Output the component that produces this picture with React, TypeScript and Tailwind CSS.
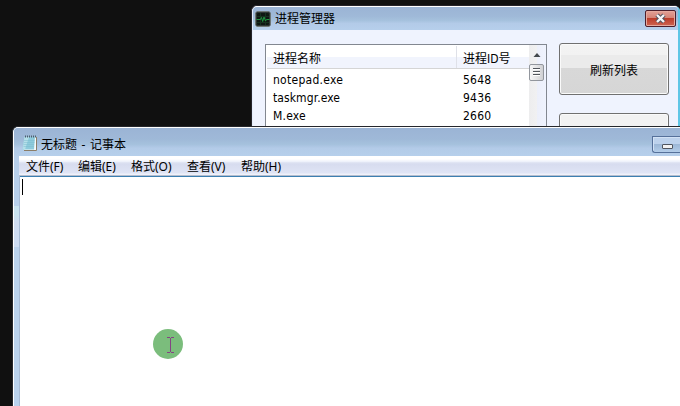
import React from "react";

const ui = "font-['Noto_Sans','Noto_Sans_CJK_SC',sans-serif]";
const tahoma = "font-['DejaVu_Sans_Condensed','Noto_Sans_CJK_SC',sans-serif]";

const titleGradient =
  "bg-[linear-gradient(to_bottom,#9bb4d5_0%,#9fb9d8_40%,#a5c1dd_58%,#b3cbe8_72%,#b6cfeb_100%)]";

const processes = [
  { name: "notepad.exe", pid: "5648", tracking: "tracking-[0.27px]" },
  { name: "taskmgr.exe", pid: "9436", tracking: "tracking-[0.1px]" },
  { name: "M.exe", pid: "2660", tracking: "tracking-[0.2px]" },
];

const menus = [
  { label: "文件(F)", width: "w-[52px]" },
  { label: "编辑(E)", width: "w-[53px]" },
  { label: "格式(O)", width: "w-[56px]" },
  { label: "查看(V)", width: "w-[54px]" },
  { label: "帮助(H)", width: "w-[54px]" },
];

function MonitorIcon() {
  return (
    <svg width="16" height="16" viewBox="0 0 16 16" className="shrink-0">
      <rect x="0.5" y="0.5" width="15" height="15" rx="2.5" fill="#101412" stroke="#6f7775" />
      <rect x="1.5" y="1.5" width="13" height="13" rx="1.5" fill="#0e1712" stroke="#2f3634" />
      <path d="M2 5.5h12M2 11.5h12M5.5 2v12M10.5 2v12" stroke="#16301f" strokeWidth="1" />
      <path d="M1.5 8.5h4l1-2 1.2 4L9 6l1.5 4 1-1.5h3" fill="none" stroke="#1f9440" strokeWidth="1" />
    </svg>
  );
}

function NotepadIcon() {
  return (
    <svg width="16" height="17" viewBox="0 0 16 17" className="shrink-0">
      <path d="M3 2h12v13.5l-13 .5z" fill="#f5fafa" />
      <path d="M14.5 2v13.5H2" fill="none" stroke="#8b7d68" />
      <path d="M2.5 2H13l-1 12.5H0.5z" fill="#8ecbdc" />
      <path d="M2.5 2H7L3 14.5H.5z" fill="#b5dfe9" />
      <path d="M2 5.5h10.5M2 7.5h10.5M1.5 9.5h10.5M1.5 11.5h10.5" stroke="#7dbccf" strokeWidth=".5" />
      <path d="M3 1.5h11" stroke="#4b626e" strokeWidth="2" strokeDasharray="1 1" />
    </svg>
  );
}

function ProcessManager() {
  return (
    <section className="absolute left-[251px] top-[5px] h-[130px] w-[429px] overflow-hidden rounded-t-[6px] border-l border-t border-[#25232a] bg-[#eff3fe]">
      <div className="h-full overflow-hidden rounded-t-[5px] border-l border-r-2 border-t border-l-[#e4edfa] border-r-[#5fc6e6] border-t-white">
        <header className={`flex h-[23px] items-center pl-[2px] pr-[2px] ${titleGradient}`}>
          <MonitorIcon />
          <h1 className={`ml-[4px] text-[12px] leading-[18px] text-black ${ui}`}>进程管理器</h1>
          <button className="ml-auto mt-[-1px] flex h-[17px] w-[31px] items-center justify-center rounded-[2px] border border-[#4c1e2b] bg-[linear-gradient(to_bottom,#e2a197_0%,#d58477_45%,#bb3d2b_50%,#cf6552_100%)] shadow-[inset_0_0_0_1px_#e5a99e]">
            <svg width="13" height="11" viewBox="0 0 13 11">
              <path d="M3 2l7 7M10 2L3 9" stroke="#54545f" strokeWidth="4.4" />
              <path d="M3 2l7 7M10 2L3 9" stroke="#f5f6f8" strokeWidth="2.4" />
            </svg>
          </button>
        </header>
        <div className="flex pl-[12px]">
          <div className="mt-[14px] flex h-[100px] w-[282px] shrink-0 border-l border-r border-t border-[#828790] bg-white">
            <div className={`w-[263px] pl-px pt-px text-[12px] text-black ${tahoma}`}>
              <div className="flex h-[23px] border-b border-[#d5d5d5] bg-[linear-gradient(to_bottom,#fff_11px,#f1f4fd_11px)] leading-[27px]">
                <div className="w-[190px] border-r border-[#dfe1e8] pl-[6px]">进程名称</div>
                <div className="pl-[6px]">进程ID号</div>
              </div>
              <div className="pt-[2px]">
                {processes.map((p) => (
                  <div key={p.pid} className="flex h-[18px] leading-[18px]">
                    <span className={`w-[190px] pl-[6px] ${p.tracking}`}>{p.name}</span>
                    <span className="pl-[6px] tracking-[0.2px]">{p.pid}</span>
                  </div>
                ))}
              </div>
            </div>
            <div className="flex w-[17px] flex-col items-start bg-[linear-gradient(to_right,#ededee,#f1f1f2_50%,#eceffa_50%,#eff3fe)] pt-[8px]">
              <svg width="8" height="4" viewBox="0 0 8 4" className="ml-[4px]">
                <path d="M4 0L7.5 4H.5z" fill="#43484d" />
              </svg>
              <div className="mt-[7px] flex h-[17px] w-[15px] flex-col items-center rounded-[2px] border border-[#92969d] bg-[linear-gradient(to_right,#f6f6f7,#e4e4e5_50%,#cfd0d3)] pt-[3px]">
                <i className="h-[2px] w-[7px] border-t border-[#51555b] bg-white" />
                <i className="mt-px h-[2px] w-[7px] border-t border-[#51555b] bg-white" />
                <i className="mt-px h-[2px] w-[7px] border-t border-[#51555b] bg-white" />
              </div>
            </div>
          </div>
          <div className="ml-[12px] mt-[13px] flex flex-col gap-[18px]">
            <button className={`h-[52px] w-[110px] rounded-[3px] border border-[#707070] bg-[linear-gradient(to_bottom,#f3f3f3_0px,#f2f2f2_11px,#ebebeb_11px,#ebebeb_24px,#d8d8d8_24px,#d6d6d6_100%)] pt-[3px] text-[12px] text-black shadow-[inset_0_0_0_1px_#fafafa] ${tahoma}`}>
              刷新列表
            </button>
            <button className="h-[52px] w-[110px] rounded-[3px] border border-[#707070] bg-[#f2f2f2] shadow-[inset_0_0_0_1px_#fafafa]" />
          </div>
        </div>
      </div>
    </section>
  );
}

function Notepad() {
  return (
    <section className="absolute left-[12px] top-[126px] flex h-[280px] w-[668px] flex-col overflow-hidden rounded-tl-[6px] border-l border-t border-[#25272c] bg-[#bad2ed]">
      <div className="flex min-h-0 flex-1 flex-col overflow-hidden rounded-tl-[5px] border-l border-t border-white">
        <header className={`flex h-[28px] shrink-0 pl-[8px] ${titleGradient}`}>
          <div className="pt-[7px]">
            <NotepadIcon />
          </div>
          <h1 className={`ml-[3px] mt-[8px] text-[12px] leading-[18px] text-black [word-spacing:1.5px] ${ui}`}>无标题 - 记事本</h1>
          <button className="ml-auto mt-[8px] flex h-[17px] w-[28px] items-center rounded-bl-[3px] border border-r-0 border-[#56719a] bg-[linear-gradient(to_bottom,#bdd2ec_45%,#9db8d7_50%,#b3cde9)] pl-[9px] pt-[4px] shadow-[inset_1px_1px_0_#d2e2f5]">
            <span className="h-[5px] w-[11px] rounded-[1px] border border-[#505660] bg-[#f2f2f2]" />
          </button>
        </header>
        <div className="flex min-h-0 flex-1">
          <div className="w-[5px] shrink-0 bg-[linear-gradient(to_bottom,#b8d0ec_50px,#c9e3f0_50px,#c9e3f0_59px,#cfdcf1_66px,#cddcf3_91px,#bad2ed_91px)]" />
          <div className="flex flex-1 flex-col">
            <nav className={`flex h-[20px] shrink-0 border-b border-[#b5bdce] bg-[linear-gradient(to_bottom,#fff_0px,#fff_3px,#ebeffa_6px,#e4e8f5_6px,#d7dcef_8px,#dfe4f5_17px,#eff1fa_18px)] pl-[7px] text-[12px] leading-[21px] text-black ${ui}`}>
              {menus.map((m) => (
                <span key={m.label} className={`shrink-0 whitespace-nowrap ${m.width}`}>
                  {m.label}
                </span>
              ))}
            </nav>
            <div className="flex-1 border-l border-[#a9bcd5] bg-white">
              <div className="h-[1px] bg-[#3c7fb1]" />
              <div className="ml-[2px] mt-[2px] h-[16px] w-px bg-black" />
            </div>
          </div>
        </div>
      </div>
    </section>
  );
}

function Pointer() {
  return (
    <div className="absolute left-[153px] top-[329px] flex size-[30px] items-center justify-center rounded-full bg-[#7bbd7c] pl-[5px] pt-[2px]">
      <svg width="7" height="16" viewBox="0 0 7 16" shapeRendering="crispEdges">
        <path d="M0 .5h3M4 .5h3M3.5 1v14M0 15.5h3M4 15.5h3" stroke="#844383" />
      </svg>
    </div>
  );
}

export default function App() {
  return (
    <main className="relative h-[406px] w-[680px] overflow-hidden bg-[#101010]">
      <ProcessManager />
      <Notepad />
      <Pointer />
    </main>
  );
}
